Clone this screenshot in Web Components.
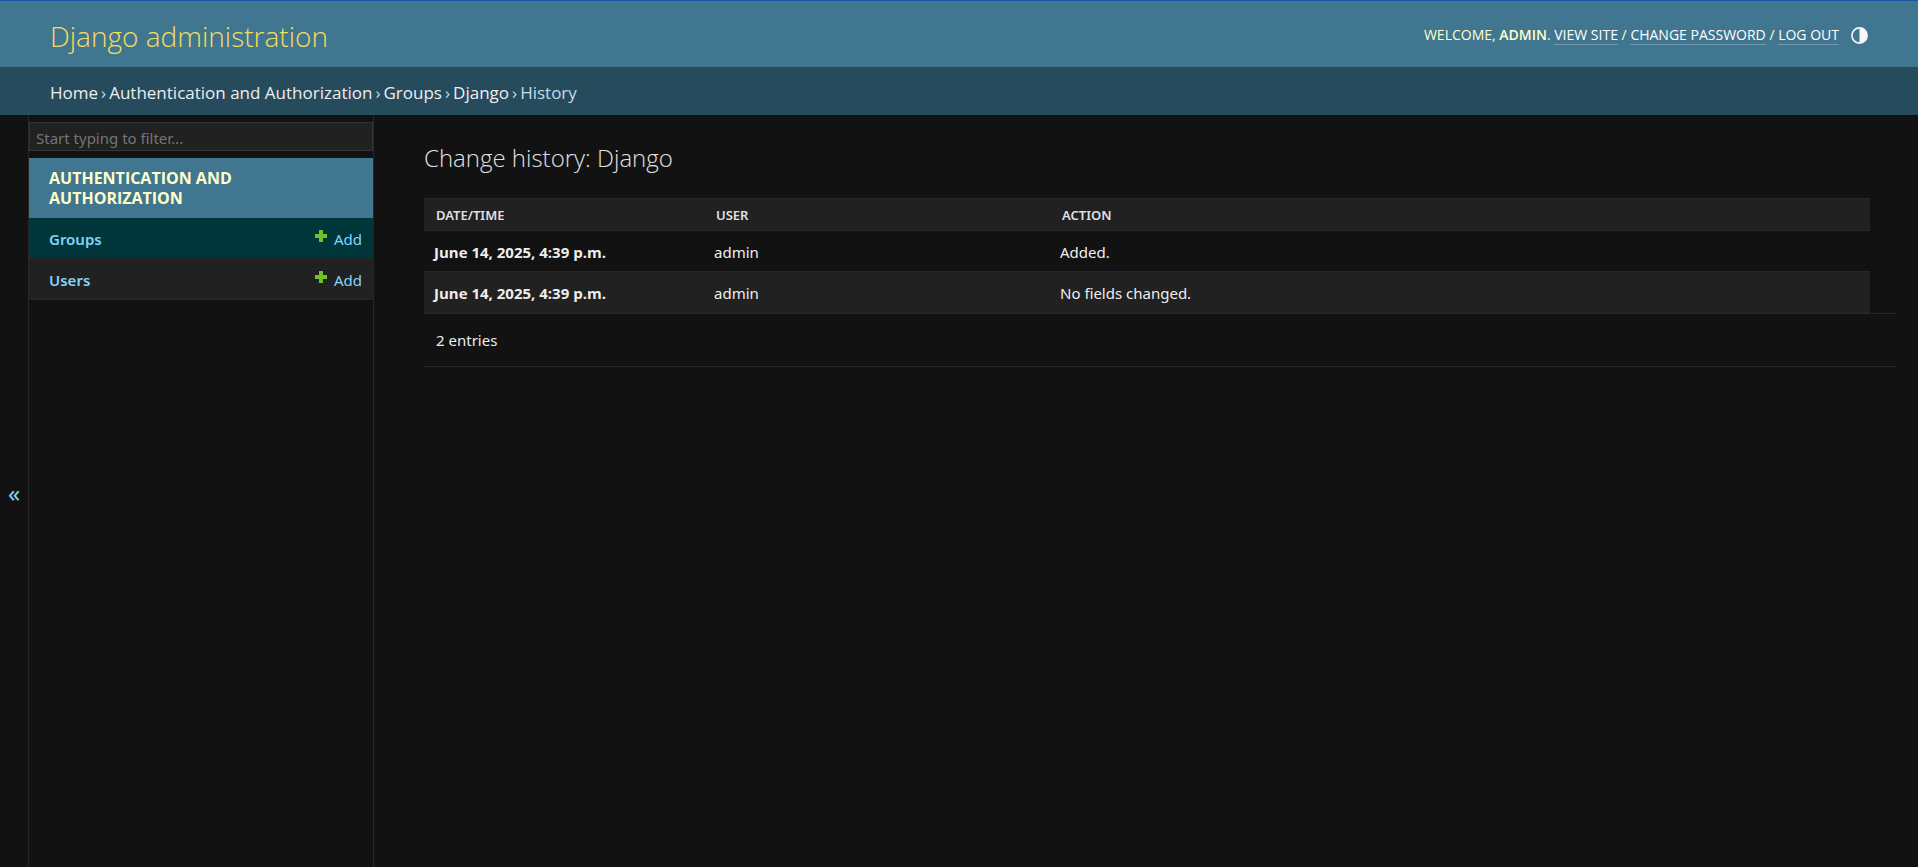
<!DOCTYPE html>
<html lang="en">
<head>
<meta charset="utf-8">
<title>Change history: Django | Django site admin</title>
<meta name="viewport" content="width=device-width, initial-scale=1">
<style>
:root {
  --primary: #417690;
  --breadcrumbs-bg: #264b5d;
  --body-bg: #121212;
  --darkened-bg: #212121;
  --selected-row: #00363a;
  --hairline: #272727;
  --border: #353535;
  --header-color: #ffffcc;
  --accent: #f5dd5d;
  --link: #81d4fa;
  --body-fg: #eeeeee;
  --quiet: #e0e0e0;
}
body {
  margin: 0;
  background: var(--body-bg);
  color: var(--body-fg);
  font-family: "Noto Sans", "Open Sans", sans-serif;
  font-size: 15px;
  line-height: 20px;
}
</style>
</head>
<body>
<admin-page>
  <admin-header slot="header" user="admin">Django administration</admin-header>
  <admin-breadcrumbs slot="breadcrumbs" current="History">
    <admin-crumb>Home</admin-crumb>
    <admin-crumb>Authentication and Authorization</admin-crumb>
    <admin-crumb>Groups</admin-crumb>
    <admin-crumb>Django</admin-crumb>
  </admin-breadcrumbs>
  <admin-sidebar slot="sidebar">
    <admin-app heading="Authentication and Authorization">
      <admin-model name="Groups" current></admin-model>
      <admin-model name="Users"></admin-model>
    </admin-app>
  </admin-sidebar>
  <change-history>Change history: Django</change-history>
</admin-page>

<script>
function define(name, html, setup) {
  const template = document.createElement('template');
  template.innerHTML = html;
  customElements.define(name, class extends HTMLElement {
    constructor() {
      super();
      this.attachShadow({ mode: 'open' }).append(template.content.cloneNode(true));
    }
    connectedCallback() {
      if (setup) setup(this, this.shadowRoot);
    }
  });
}

define('admin-page', `
<style>
  :host { display: flex; flex-direction: column; min-height: 100vh; }
  .body { display: flex; flex: 1; }
  main { flex: 1; min-width: 0; padding: 28px 23px 50px 50px; }
</style>
<slot name="header"></slot>
<slot name="breadcrumbs"></slot>
<div class="body">
  <slot name="sidebar"></slot>
  <main><slot></slot></main>
</div>`);

define('admin-header', `
<style>
  :host { display: block; background: var(--primary); border-top: 1px solid #1a56a8; color: var(--header-color); }
  header { display: flex; justify-content: space-between; align-items: center; box-sizing: border-box; height: 66px; padding: 2px 50px 0; border-top: 1px solid #3f74a9; }
  .site { color: var(--accent); text-decoration: none; font: 300 28px/36px "Open Sans", sans-serif; }
  .tools { display: flex; align-items: center; gap: 12px; font: 400 14px/18px "Open Sans", sans-serif; text-transform: uppercase; }
  strong { font-weight: 600; }
  .tools a, .logout { color: #fff; text-decoration: none; border: 0; border-bottom: 1px solid rgba(255, 255, 255, .25); }
  .logout { font: inherit; text-transform: inherit; background: none; padding: 0; cursor: pointer; }
  .theme { display: flex; border: 0; padding: 0; background: none; color: #f7f7f7; cursor: pointer; }
  svg { width: 17px; height: 17px; }
</style>
<header>
  <a class="site" href="#"><slot></slot></a>
  <div class="tools">
    <div>Welcome, <strong></strong>. <a href="#">View site</a> / <a href="#">Change password</a> / <button class="logout">Log out</button></div>
    <button class="theme" aria-label="Toggle theme">
      <svg viewBox="0 0 17 17" aria-hidden="true"><circle cx="8.5" cy="8.5" r="7.6" fill="none" stroke="currentColor" stroke-width="1.6"/><path d="M8.5 1a7.5 7.5 0 0 1 0 15z" fill="currentColor"/></svg>
    </button>
  </div>
</header>`, (host, root) => {
  root.querySelector('strong').textContent = host.getAttribute('user');
});

define('admin-breadcrumbs', `
<style>
  :host { display: block; background: var(--breadcrumbs-bg); color: #c4dce8; padding: 15px 50px 11px; font: 17px/22px "Open Sans", sans-serif; }
  nav { display: flex; gap: 3px; }
</style>
<nav aria-label="Breadcrumbs"><slot></slot><span></span></nav>`, (host, root) => {
  root.querySelector('span').textContent = host.getAttribute('current');
});

define('admin-crumb', `
<style>
  :host { display: flex; gap: 3px; }
  a { color: #eee; text-decoration: none; }
</style>
<a href="#"><slot></slot></a><span>›</span>`);

define('admin-sidebar', `
<style>
  :host { display: flex; flex: 0 0 374px; box-sizing: border-box; border-right: 1px solid var(--hairline); }
  .toggle { flex: 0 0 29px; padding: 4px 0 0; border: 0; border-right: 1px solid var(--hairline); background: none; color: var(--link); font: 24px/28px "Noto Sans", sans-serif; cursor: pointer; }
  nav { flex: 1; min-width: 0; padding-top: 7px; }
  input { display: block; box-sizing: border-box; width: 100%; height: 29px; margin-bottom: 7px; padding: 2px 6px 0; border: 1px solid var(--border); border-radius: 0; background: var(--darkened-bg); color: var(--body-fg); font: inherit; }
  input::placeholder { color: #757575; opacity: 1; }
</style>
<button class="toggle" aria-label="Toggle navigation">«</button>
<nav aria-label="Sidebar">
  <input type="search" placeholder="Start typing to filter..." aria-label="Filter navigation items">
  <slot></slot>
</nav>`);

define('admin-app', `
<style>
  :host { display: block; }
  h2 { margin: 0; padding: 10px 20px; background: var(--primary); font: 700 16px/20px "Open Sans", sans-serif; text-transform: uppercase; }
  a { display: block; max-width: 250px; color: var(--header-color); text-decoration: none; }
</style>
<h2><a href="#"></a></h2>
<slot></slot>`, (host, root) => {
  root.querySelector('a').textContent = host.getAttribute('heading');
});

define('admin-model', `
<style>
  :host { display: flex; justify-content: space-between; align-items: center; height: 40px; padding: 0 11px 0 20px; border-bottom: 1px solid var(--hairline); background: var(--darkened-bg); }
  :host([current]) { background: var(--selected-row); }
  a { color: var(--link); text-decoration: none; padding-top: 2px; }
  .name { font-weight: 600; }
  .add { display: flex; gap: 6px; }
  svg { width: 14px; height: 14px; }
</style>
<a class="name" href="#"></a>
<a class="add" href="#"><svg viewBox="0 0 14 14" aria-hidden="true"><path d="M5 1h4v4h4v4h-4v4h-4v-4h-4v-4h4z" fill="#70bf2b"/></svg>Add</a>`, (host, root) => {
  root.querySelector('.name').textContent = host.getAttribute('name');
});

define('change-history', `
<style>
  :host { display: block; }
  h1 { margin: 0 0 25px; font: 300 24px/30px "Open Sans", sans-serif; color: var(--quiet); }
  .results { margin-right: 25px; }
  table { width: 100%; table-layout: fixed; border-collapse: separate; border-spacing: 0; }
  col.date { width: 280px; }
  col.user { width: 346px; }
  th, td { text-align: left; }
  thead th { height: 31px; padding: 0 12px; background: var(--darkened-bg); border: solid var(--hairline); border-width: 1px 0; font-size: 13px; line-height: 16px; font-weight: 600; text-transform: uppercase; color: var(--quiet); }
  tbody th, tbody td { height: 38px; padding: 2px 10px 0; border-bottom: 1px solid var(--hairline); }
  tbody th { font-weight: 700; font-family: "Open Sans", sans-serif; }
  tbody tr:nth-child(even) > * { background: var(--darkened-bg); }
  p { margin: 0; padding: 16px 12px; border: solid var(--hairline); border-width: 1px 0; }
</style>
<h1><slot></slot></h1>
<div class="results">
  <table>
    <colgroup><col class="date"><col class="user"><col></colgroup>
    <thead><tr><th scope="col">Date/time</th><th scope="col">User</th><th scope="col">Action</th></tr></thead>
    <tbody>
      <tr><th scope="row">June 14, 2025, 4:39 p.m.</th><td>admin</td><td>Added.</td></tr>
      <tr><th scope="row">June 14, 2025, 4:39 p.m.</th><td>admin</td><td>No fields changed.</td></tr>
    </tbody>
  </table>
</div>
<p>2 entries</p>`);
</script>
</body>
</html>
